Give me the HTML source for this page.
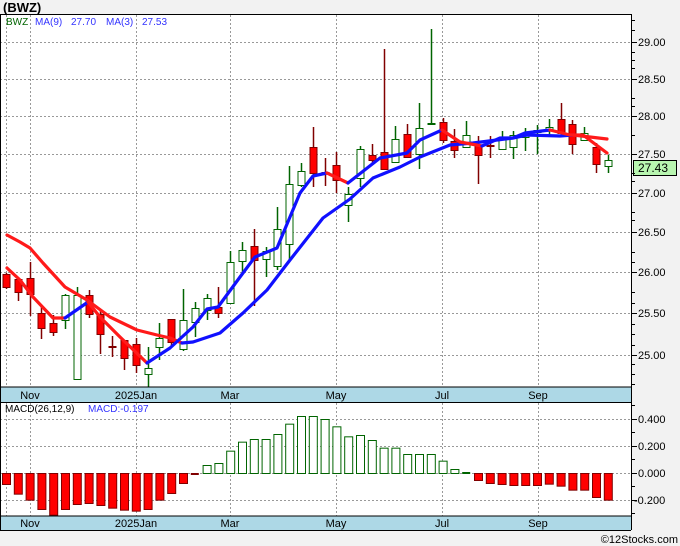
<!DOCTYPE html>
<html><head><meta charset="utf-8"><style>
html,body{margin:0;padding:0;background:#f2f2f2}
svg{display:block}
text{font-family:"Liberation Sans","DejaVu Sans",sans-serif;font-size:11px}
</style></head><body>
<svg id="s" width="680" height="546" xmlns="http://www.w3.org/2000/svg">
<rect x="0" y="0" width="680" height="546" fill="#f2f2f2"/>
<rect x="0" y="14" width="631" height="516" fill="#fff"/>
<text x="3" y="12" style="font-size:13px;font-weight:bold" fill="#000">(BWZ)</text>
<g id="grid" stroke="#999" stroke-width="1" stroke-dasharray="2,2"></g>
<rect x="0" y="387" width="631" height="15" fill="#add8e6"/>
<rect x="0" y="516" width="631" height="14" fill="#add8e6"/>
<g fill="#000">
<text x="30" y="399" text-anchor="middle">Nov</text><text x="136" y="399" text-anchor="middle">2025Jan</text><text x="230" y="399" text-anchor="middle">Mar</text><text x="336" y="399" text-anchor="middle">May</text><text x="442" y="399" text-anchor="middle">Jul</text><text x="538" y="399" text-anchor="middle">Sep</text>
<text x="30" y="527" text-anchor="middle">Nov</text><text x="136" y="527" text-anchor="middle">2025Jan</text><text x="230" y="527" text-anchor="middle">Mar</text><text x="336" y="527" text-anchor="middle">May</text><text x="442" y="527" text-anchor="middle">Jul</text><text x="538" y="527" text-anchor="middle">Sep</text>
</g>
<g id="c"></g>
<text x="6" y="25" fill="#006400" style="font-size:10px">BWZ</text>
<text x="35" y="25" fill="#3333ff" style="font-size:10px">MA(9)</text>
<text x="71" y="25" fill="#3333ff" style="font-size:10px">27.70</text>
<text x="106" y="25" fill="#3333ff" style="font-size:10px">MA(3)</text>
<text x="142" y="25" fill="#3333ff" style="font-size:10px">27.53</text>
<text x="5" y="412" fill="#000" style="font-size:10px">MACD(26,12,9)</text>
<text x="88" y="412" fill="#3333ff" style="font-size:10px">MACD:-0.197</text>
<g fill="#000" style="font-size:12px">
<text x="638" y="46">29.00</text><text x="638" y="83">28.50</text><text x="638" y="120">28.00</text><text x="638" y="158">27.50</text><text x="638" y="197">27.00</text><text x="638" y="236">26.50</text><text x="638" y="276">26.00</text><text x="638" y="317">25.50</text><text x="638" y="359">25.00</text>
<text x="638" y="423">0.400</text><text x="638" y="450">0.200</text><text x="638" y="477">0.000</text><text x="634" y="504">-0.200</text>
</g>
<rect x="633.5" y="160.5" width="43" height="15" fill="#b8f5b0" stroke="#000"/>
<text x="638" y="172" fill="#000" style="font-size:12px">27.43</text>
<line x1="0" y1="14.5" x2="631" y2="14.5" stroke="#000"/>
<line x1="631.5" y1="14" x2="631.5" y2="530" stroke="#000"/>
<line x1="0.5" y1="14" x2="0.5" y2="530" stroke="#000"/>
<line x1="0" y1="387" x2="631" y2="387" stroke="#000"/>
<line x1="0" y1="402.5" x2="631" y2="402.5" stroke="#000"/>
<line x1="0" y1="516" x2="631" y2="516" stroke="#000"/>
<line x1="0" y1="530.5" x2="631" y2="530.5" stroke="#000"/>
<g id="ticks" stroke="#000"></g>
<text x="678" y="543" text-anchor="end" fill="#000" style="font-size:11px">©12Stocks.com</text>
</svg>
<script>
var NS="http://www.w3.org/2000/svg";
function el(p,t,a){var e=document.createElementNS(NS,t);for(var k in a)e.setAttribute(k,a[k]);p.appendChild(e);return e;}
var g=document.getElementById('grid'),c=document.getElementById('c'),tk=document.getElementById('ticks');
[6.5,30.5,136.5,230.5,336.5,442.5,538.5].forEach(function(x){el(g,'line',{x1:x,y1:15,x2:x,y2:387});el(g,'line',{x1:x,y1:403,x2:x,y2:516});});
[42,79,116,154,193,232,272,313,355].forEach(function(y){el(g,'line',{x1:0,y1:y+.5,x2:631,y2:y+.5});el(tk,'line',{x1:631,y1:y+.5,x2:637,y2:y+.5});});
[419,446,473,500].forEach(function(y){el(g,'line',{x1:0,y1:y+.5,x2:631,y2:y+.5});el(tk,'line',{x1:631,y1:y+.5,x2:637,y2:y+.5});});
[20,30,52,60,68,98,106,135,173,181,212,220,252,262,292,303,324,334,345,364,374,384].forEach(function(y){el(tk,'line',{x1:631,y1:y+.5,x2:635,y2:y+.5});});
[405,432,459,486,513].forEach(function(y){el(tk,'line',{x1:631,y1:y+.5,x2:635,y2:y+.5});});
var m=[343,372,390,418,435,418,403,400,406,414,420,423,418,390,370,340,313,286,280,243,216,208,208,193,162,139,139,148,170,200,196,211,234,234,253,253,253,273,298,308,331,340,343,346,346,346,342,348,360,360,382,390];
m.forEach(function(v,i){var x=6+11.8*i,h=(v-310)/3;
 if(i==16){el(c,'rect',{x:x-4,y:473,width:8,height:2,fill:'#800000'});return;}
 if(i==39){el(c,'rect',{x:x-4,y:472,width:8,height:2,fill:'#006400'});return;}
 if(h>0)el(c,'rect',{x:x-4+.5,y:473.5,width:8,height:h,fill:'#f00',stroke:'#800000'});
 else el(c,'rect',{x:x-4+.5,y:473+h+.5,width:8,height:-h,fill:'#fff',stroke:'#006400'});
});
var d=[[274,287,273,289,'r'],[279,292,279,301,'r'],[278,294,262,316,'r'],[313,328,307,339,'r'],[323,332,315,336,'r'],[295,320,294,329,'g'],[295,379,287,379,'g'],[295,314,290,318,'r'],[314,334,310,354,'r'],[347,349,336,357,'d'],[340,358,340,370,'r'],[344,365,338,373,'r'],[368,374,347,387,'g'],[338,347,323,360,'g'],[319,342,319,347,'r'],[320,349,289,351,'g'],[308,322,302,337,'g'],[298,310,294,320,'g'],[307,313,287,318,'r'],[262,303,251,303,'g'],[250,261,242,273,'g'],[246,260,229,306,'r'],[251,259,247,277,'g'],[229,266,207,270,'g'],[184,244,166,260,'g'],[171,185,163,187,'g'],[147,173,127,187,'r'],[173,174,158,186,'d'],[165,180,152,193,'r'],[194,205,187,222,'g'],[149,178,146,187,'g'],[155,160,144,163,'r'],[152,169,49,169,'r'],[139,162,126,162,'g'],[134,157,124,158,'r'],[128,154,103,169,'g'],[123,123,29,123,'g'],[122,140,118,143,'r'],[141,150,129,158,'r'],[135,147,121,147,'g'],[145,155,136,184,'r'],[146,147,136,158,'d'],[138,149,131,149,'g'],[135,147,131,159,'g'],[133,137,128,151,'g'],[130,132,125,154,'g'],[127,129,119,137,'g'],[119,133,103,137,'r'],[124,144,120,154,'r'],[133,140,127,141,'g'],[147,164,143,173,'r'],[160,166,155,173,'g']];
d.forEach(function(a,i){var x=Math.round(6+11.8*i)+.5,col=a[4]=='g'?'#006400':'#800000';
 el(c,'line',{x1:x,y1:a[2],x2:x,y2:a[3],stroke:col,'stroke-width':1.5});
 if(a[4]=='d'){el(c,'rect',{x:x-4,y:a[0]-1,width:8,height:2,fill:col});return;}
 el(c,'rect',{x:x-3.5,y:a[0]+.5,width:7,height:Math.max(1,a[1]-a[0]),fill:a[4]=='g'?'#fff':'#f00',stroke:col});
});
function seg(pts,col){el(c,'polyline',{points:pts.map(function(p){return p.join(',')}).join(' '),fill:'none',stroke:col,'stroke-width':3.2,'stroke-linejoin':'round','stroke-linecap':'round'});}
var R='#ff1a1a',B='#1010ff';
seg([[7,235],[20,242],[30,248],[43,263],[65,287],[87,300],[110,317],[137,330],[157,335],[170,338],[182,343]],R);
seg([[182,343],[193,342],[220,333],[243,313],[267,290],[290,260],[323,218],[350,199],[373,178],[400,167],[420,157],[450,145],[473,143],[497,140],[513,138],[527,135],[560,136],[573,135]],B);
seg([[573,135],[607,139]],R);
seg([[7,268],[20,280],[33,297],[53,318],[65,318]],R);
seg([[65,318],[88,302]],B);
seg([[88,302],[100,317],[120,337],[147,363]],R);
seg([[147,363],[170,348],[182,337],[193,327],[207,309],[218,307],[240,277],[255,257],[277,248],[300,193],[313,176],[327,173]],B);
seg([[327,173],[348,183]],R);
seg([[348,183],[380,158],[407,153],[420,140],[442,130]],B);
seg([[442,130],[460,142],[482,146]],R);
seg([[482,146],[500,138],[513,138],[525,133],[550,130]],B);
seg([[550,130],[570,135],[583,135],[607,153]],R);
</script>
</body></html>
